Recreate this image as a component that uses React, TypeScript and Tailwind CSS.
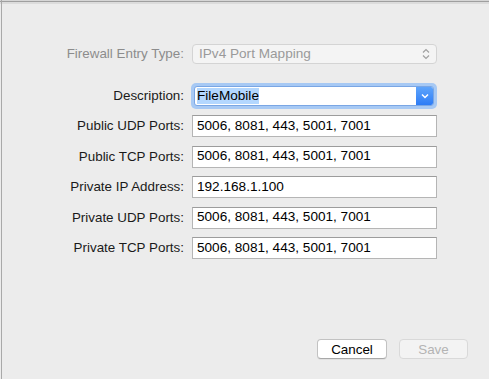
import React from "react";

// Firewall entry sheet, macOS style.

const FONT = { fontFamily: '"Liberation Sans", Arial, sans-serif' };

const FIELDS = [
  { label: "Public UDP Ports:", value: "5006, 8081, 443, 5001, 7001" },
  { label: "Public TCP Ports:", value: "5006, 8081, 443, 5001, 7001" },
  { label: "Private IP Address:", value: "192.168.1.100" },
  { label: "Private UDP Ports:", value: "5006, 8081, 443, 5001, 7001" },
  { label: "Private TCP Ports:", value: "5006, 8081, 443, 5001, 7001" },
];

function Row({ label, children, muted }: { label: string; children: React.ReactNode; muted?: boolean }) {
  return (
    <div className="flex items-center">
      <div className={"w-[185px] pr-[1px] text-right text-[13.4px] whitespace-nowrap " + (muted ? "text-[#8c8c8c]" : "text-[#1a1a1a]")}>
        {label}
      </div>
      <div className="ml-[7px] w-[245px]">{children}</div>
    </div>
  );
}

export default function App() {
  return (
    <div style={FONT} className="w-[489px] h-[379px] overflow-hidden bg-[#ececec] relative">
      <div className="absolute left-0 top-0 w-full h-[1px] bg-[#d6d6d6]" />
      <div className="absolute left-0 top-[1px] w-full h-[1px] bg-[#9f9f9f]" />
      <div className="absolute left-0 top-[2px] w-full h-[2px] bg-[#dcdcdc]" />
      <div className="absolute left-[1px] top-0 w-[1px] h-full bg-[#a9a9a9]" />

      <div className="flex flex-col pt-[44px]">
        <Row label="Firewall Entry Type:" muted>
          <div className="h-[20px] rounded-[4px] border border-[#d4d4d4] bg-[#f4f4f4] flex items-center justify-between pl-[6px] pr-[6px] text-[13.6px] text-[#9a9a9a]">
            <span>IPv4 Port Mapping</span>
            <svg width="8" height="12" viewBox="0 0 8 12" fill="none" stroke="#a0a0a0" strokeWidth="1.2">
              <path d="M1 4.5 L4 1.5 L7 4.5" />
              <path d="M1 7.5 L4 10.5 L7 7.5" />
            </svg>
          </div>
        </Row>

        <div className="mt-[19px]">
          <Row label="Description:">
            <div className="h-[26px] -ml-[1px] rounded-[5px] bg-[#a7c9f4] p-[3px]">
              <div className="h-full flex bg-white border border-[#7aa6e4] rounded-[3px] overflow-hidden">
                <div className="flex-1 flex items-center pl-[2px] text-[13.6px] text-black">
                  <span className="bg-[#b3d7ff] leading-[16px]">FileMobile</span>
                </div>
                <div className="w-[17px] bg-gradient-to-b from-[#5ea4fb] to-[#2d7cf6] flex items-center justify-center">
                  <svg width="8" height="6" viewBox="0 0 8 6" fill="none" stroke="white" strokeWidth="1.5">
                    <path d="M1 1.5 L4 4.5 L7 1.5" />
                  </svg>
                </div>
              </div>
            </div>
          </Row>
        </div>

        <div className="mt-[6px] flex flex-col gap-[8.5px]">
          {FIELDS.map((f) => (
            <Row key={f.label} label={f.label}>
              <div className="h-[22px] bg-white border border-[#b5b5b5] border-t-[#9c9c9c] flex items-center pl-[4px] text-[13.6px] text-black">
                {f.value}
              </div>
            </Row>
          ))}
        </div>
      </div>

      <div className="absolute left-[317px] top-[339px] flex gap-[12px]">
        <button className="w-[70px] h-[20px] rounded-[4px] bg-white border border-[#c2c2c2] border-b-[#a8a8a8] text-[13.4px] text-black shadow-[0_1px_0_rgba(0,0,0,0.05)]">
          Cancel
        </button>
        <button className="w-[69px] h-[20px] rounded-[4px] bg-[#f3f3f3] border border-[#d9d9d9] text-[13.4px] text-[#b4b4b4]">
          Save
        </button>
      </div>
    </div>
  );
}
